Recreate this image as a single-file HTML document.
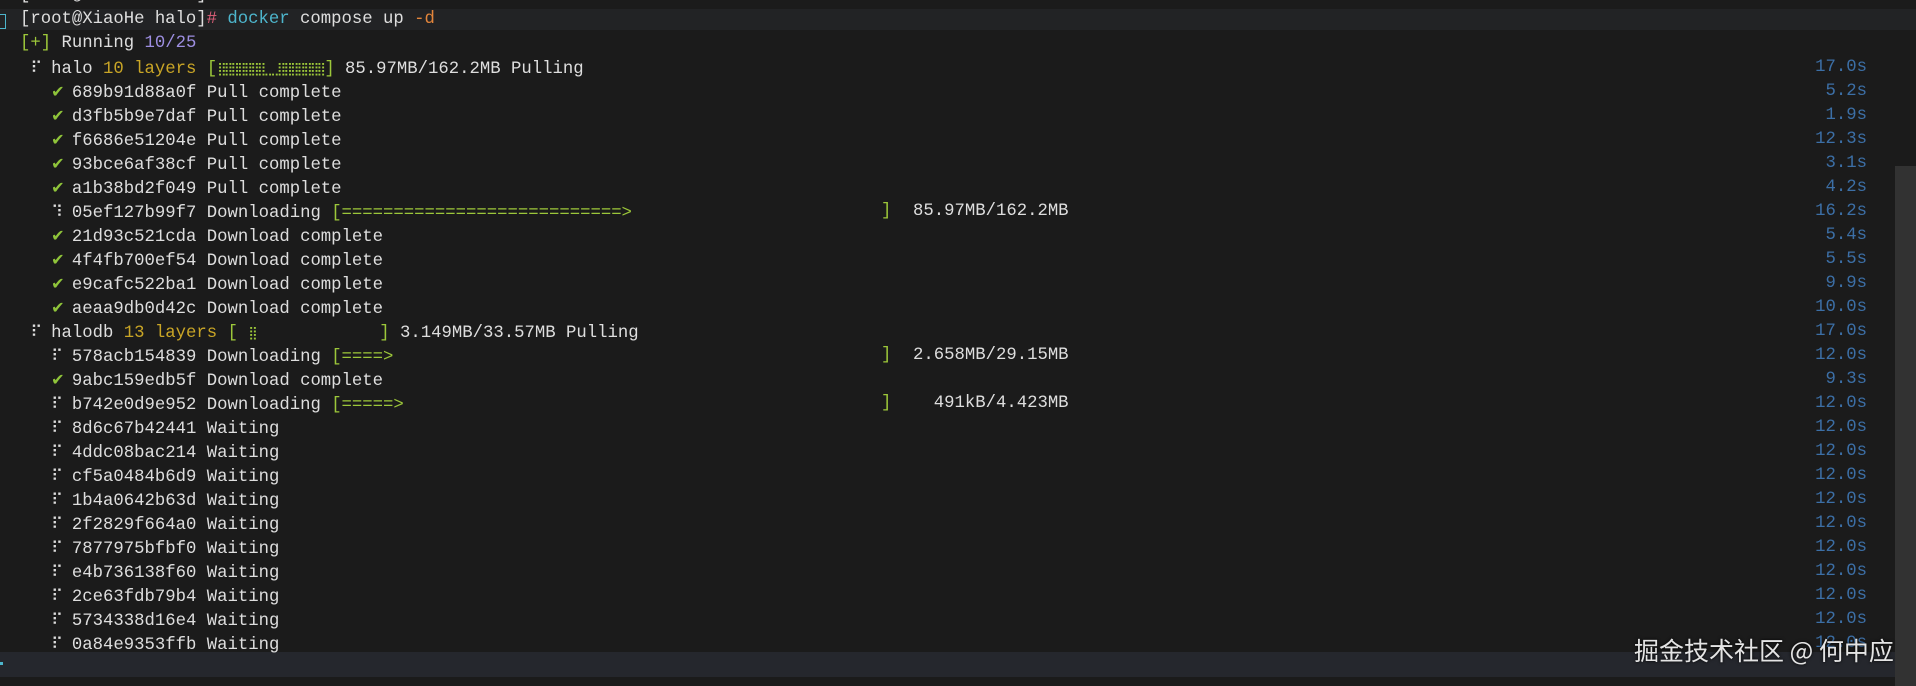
<!DOCTYPE html>
<html><head><meta charset="utf-8"><style>
html,body{margin:0;padding:0;width:1916px;height:686px;overflow:hidden;background:#1b1b1b;}
body{position:relative;font-family:"Liberation Mono","DejaVu Sans Mono",monospace;font-size:17.3px;color:#dedede;}
.l{position:absolute;left:20px;height:24px;line-height:24px;white-space:pre;margin-top:2px}
.t{position:absolute;left:1780px;width:87px;text-align:right;height:24px;line-height:24px;color:#3c6fa6;margin-top:2px}
.g{color:#9cc73a}.y{color:#c9a526}.p{color:#9d8ee0}.c{color:#4db5cc}.o{color:#e3853b}.r{color:#e0607a}
.ch{display:inline-block;width:20.8px;color:#8fc43a;font-family:"DejaVu Sans",sans-serif;font-size:16px}
.sp{display:inline-block;width:20.8px;font-family:"DejaVu Sans",sans-serif;font-size:16px}
.br{font-family:"DejaVu Sans",sans-serif;font-size:13px;letter-spacing:-2.9px;color:#9cc73a}
</style></head><body>
<div style="position:absolute;left:0;top:9px;width:1916px;height:21px;background:#222325"></div>
<div style="position:absolute;left:0;top:14px;width:5px;height:13px;border:1px solid #4db5cc;border-left:none"></div>
<div style="position:absolute;left:1895px;top:166px;width:21px;height:520px;background:#323232"></div>
<div style="position:absolute;left:0;top:652px;width:1895px;height:25px;background:#25272d"></div>
<div style="position:absolute;left:0;top:662px;width:3px;height:3px;background:#4db5cc"></div>

<div class="l" style="top:-18px">[root@XiaoHe halo]<span class="r">#</span></div>
<div class="l" style="top:6px">[root@XiaoHe halo]<span class="r">#</span> <span class="c">docker</span> compose up <span class="o">-d</span></div>
<div class="l" style="top:30px"><span class="g">[+]</span> Running <span class="p">10/25</span></div>
<div class="l" style="top:54px"> <span class="sp">⠏</span>halo <span class="y">10 layers</span> <span class="g">[</span><span class="br">⣿⣿⣿⣿⣿⣿⣿⣀⣀⣿⣿⣿⣿⣿⣿⣿ </span><span class="g">]</span> 85.97MB/162.2MB Pulling</div>
<div class="t" style="top:54px">17.0s</div>

<div class="l" style="top:78px">   <span class="ch">✔</span>689b91d88a0f Pull complete</div><div class="t" style="top:78px">5.2s</div>
<div class="l" style="top:102px">   <span class="ch">✔</span>d3fb5b9e7daf Pull complete</div><div class="t" style="top:102px">1.9s</div>
<div class="l" style="top:126px">   <span class="ch">✔</span>f6686e51204e Pull complete</div><div class="t" style="top:126px">12.3s</div>
<div class="l" style="top:150px">   <span class="ch">✔</span>93bce6af38cf Pull complete</div><div class="t" style="top:150px">3.1s</div>
<div class="l" style="top:174px">   <span class="ch">✔</span>a1b38bd2f049 Pull complete</div><div class="t" style="top:174px">4.2s</div>
<div class="l" style="top:198px">   <span class="sp">⠹</span>05ef127b99f7 Downloading <span class="g">[===========================&gt;</span></div>
<div class="l g" style="top:198px;left:881px">]</div><div class="l" style="top:198px;left:913px">85.97MB/162.2MB</div><div class="t" style="top:198px">16.2s</div>
<div class="l" style="top:222px">   <span class="ch">✔</span>21d93c521cda Download complete</div><div class="t" style="top:222px">5.4s</div>
<div class="l" style="top:246px">   <span class="ch">✔</span>4f4fb700ef54 Download complete</div><div class="t" style="top:246px">5.5s</div>
<div class="l" style="top:270px">   <span class="ch">✔</span>e9cafc522ba1 Download complete</div><div class="t" style="top:270px">9.9s</div>
<div class="l" style="top:294px">   <span class="ch">✔</span>aeaa9db0d42c Download complete</div><div class="t" style="top:294px">10.0s</div>
<div class="l" style="top:318px"> <span class="sp">⠏</span>halodb <span class="y">13 layers</span> <span class="g">[ <span class="br">⣿</span>            ]</span> 3.149MB/33.57MB Pulling</div><div class="t" style="top:318px">17.0s</div>
<div class="l" style="top:342px">   <span class="sp">⠏</span>578acb154839 Downloading <span class="g">[====&gt;</span></div>
<div class="l g" style="top:342px;left:881px">]</div><div class="l" style="top:342px;left:913px">2.658MB/29.15MB</div><div class="t" style="top:342px">12.0s</div>
<div class="l" style="top:366px">   <span class="ch">✔</span>9abc159edb5f Download complete</div><div class="t" style="top:366px">9.3s</div>
<div class="l" style="top:390px">   <span class="sp">⠏</span>b742e0d9e952 Downloading <span class="g">[=====&gt;</span></div>
<div class="l g" style="top:390px;left:881px">]</div><div class="l" style="top:390px;left:913px">  491kB/4.423MB</div><div class="t" style="top:390px">12.0s</div>
<div class="l" style="top:414px">   <span class="sp">⠏</span>8d6c67b42441 Waiting</div><div class="t" style="top:414px">12.0s</div>
<div class="l" style="top:438px">   <span class="sp">⠏</span>4ddc08bac214 Waiting</div><div class="t" style="top:438px">12.0s</div>
<div class="l" style="top:462px">   <span class="sp">⠏</span>cf5a0484b6d9 Waiting</div><div class="t" style="top:462px">12.0s</div>
<div class="l" style="top:486px">   <span class="sp">⠏</span>1b4a0642b63d Waiting</div><div class="t" style="top:486px">12.0s</div>
<div class="l" style="top:510px">   <span class="sp">⠏</span>2f2829f664a0 Waiting</div><div class="t" style="top:510px">12.0s</div>
<div class="l" style="top:534px">   <span class="sp">⠏</span>7877975bfbf0 Waiting</div><div class="t" style="top:534px">12.0s</div>
<div class="l" style="top:558px">   <span class="sp">⠏</span>e4b736138f60 Waiting</div><div class="t" style="top:558px">12.0s</div>
<div class="l" style="top:582px">   <span class="sp">⠏</span>2ce63fdb79b4 Waiting</div><div class="t" style="top:582px">12.0s</div>
<div class="l" style="top:606px">   <span class="sp">⠏</span>5734338d16e4 Waiting</div><div class="t" style="top:606px">12.0s</div>
<div class="l" style="top:630px">   <span class="sp">⠏</span>0a84e9353ffb Waiting</div><div class="t" style="top:630px">12.0s</div>

<div style="position:absolute;left:1634px;top:632px;height:36px;line-height:36px;font-family:'Noto Sans CJK SC','WenQuanYi Zen Hei',sans-serif;font-size:25px;color:#e4e4e4;text-shadow:0 0 3px #000;white-space:nowrap">掘金技术社区 @ 何中应</div>
</body></html>
